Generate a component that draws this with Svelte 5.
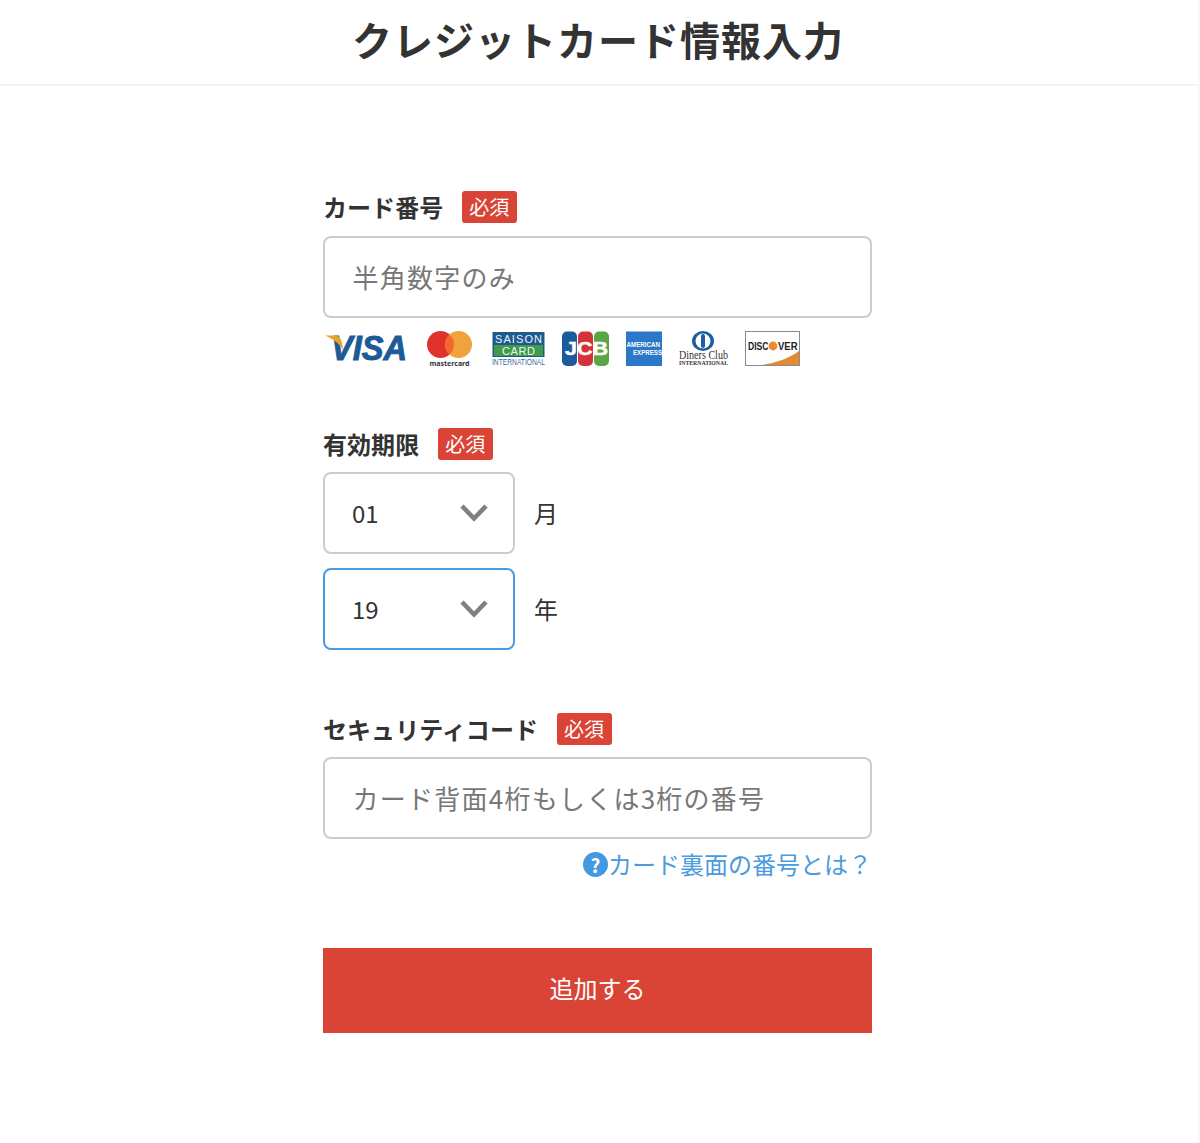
<script>
  let cardNumber = $state('');
  let month = $state('01');
  let year = $state('19');
  let securityCode = $state('');

  const months = ['01', '02', '03', '04', '05', '06', '07', '08', '09', '10', '11', '12'];
  const years = ['19', '20', '21', '22', '23', '24', '25', '26', '27', '28'];
</script>

{#snippet required()}
  <span class="badge">必須</span>
{/snippet}

{#snippet chevron()}
  <svg class="chevron" width="30" height="20" viewBox="0 0 30 20">
    <path d="M3 3 L15 15.5 L27 3" fill="none" stroke="#808080" stroke-width="4.6" />
  </svg>
{/snippet}

<div class="page">
  <header>
    <h1>クレジットカード情報入力</h1>
  </header>

  <form class="form" onsubmit={(e) => e.preventDefault()}>
    <div class="field first">
      <div class="label">カード番号 {@render required()}</div>
      <input type="text" placeholder="半角数字のみ" bind:value={cardNumber} />
      <div class="logos">
        <svg width="88" height="36" viewBox="0 0 88 36">
          <text x="8" y="29" class="visa" textLength="76" lengthAdjust="spacingAndGlyphs">VISA</text>
          <path d="M2 4.5 L12 4.5 C17 5 19 8 20 19 C16 12 10 8 2 4.5 Z" fill="#e9a32d" />
        </svg>
        <svg width="49" height="36" viewBox="0 0 49 36">
          <circle cx="13.5" cy="13.5" r="13.5" fill="#e0312a" />
          <circle cx="31.5" cy="13.5" r="13.5" fill="#f0a33c" />
          <path d="M22.5 3.44 A13.5 13.5 0 0 1 22.5 23.56 A13.5 13.5 0 0 1 22.5 3.44 Z" fill="#f26a2b" />
          <text x="2.5" y="34.5" class="mc" textLength="40" lengthAdjust="spacingAndGlyphs">mastercard</text>
        </svg>
        <svg width="53" height="36" viewBox="0 0 53 36">
          <rect x="0.5" y="1" width="52" height="25" fill="#1d5a90" />
          <rect x="2" y="14" width="49" height="11" fill="#3f9b4a" />
          <text x="26.5" y="12" class="saison" text-anchor="middle" textLength="47">SAISON</text>
          <text x="26.5" y="24" class="saison" text-anchor="middle" textLength="33">CARD</text>
          <text x="0" y="33.5" class="intl" textLength="53" lengthAdjust="spacingAndGlyphs">INTERNATIONAL</text>
        </svg>
        <svg width="49" height="36" viewBox="0 0 49 36">
          <rect x="1" y="0.5" width="15" height="34.5" rx="5" fill="#1d5a9c" />
          <rect x="17" y="0.5" width="15" height="34.5" rx="5" fill="#d6323a" />
          <rect x="33" y="0.5" width="15" height="34.5" rx="5" fill="#5aa644" />
          <text x="4" y="24" class="jcb" textLength="43" lengthAdjust="spacingAndGlyphs">JCB</text>
        </svg>
        <svg width="36" height="36" viewBox="0 0 36 36">
          <rect x="0" y="0.5" width="36" height="34.5" fill="#2b78c9" />
          <text x="0.5" y="15.5" class="amex" textLength="33.5" lengthAdjust="spacingAndGlyphs">AMERICAN</text>
          <text x="7" y="24" class="amex" textLength="29" lengthAdjust="spacingAndGlyphs">EXPRESS</text>
        </svg>
        <svg width="51" height="36" viewBox="0 0 51 36">
          <ellipse cx="25" cy="10" rx="11" ry="10" fill="#1b5f9f" />
          <ellipse cx="25" cy="10" rx="7.5" ry="7.5" fill="#fff" />
          <rect x="23" y="3" width="4" height="14" rx="2" fill="#1b5f9f" />
          <text x="1" y="28" class="diners" textLength="49" lengthAdjust="spacingAndGlyphs">Diners Club</text>
          <text x="1" y="34" class="diners-sub" textLength="49" lengthAdjust="spacingAndGlyphs">INTERNATIONAL</text>
        </svg>
        <svg width="55" height="36" viewBox="0 0 55 36">
          <rect x="0.5" y="0.5" width="54" height="34" fill="#fff" stroke="#8a8a8a" />
          <path d="M17 34 C30 32 45 27 54 20 L54 34 Z" fill="#e58a34" />
          <text x="3" y="19" class="discover" textLength="20.5" lengthAdjust="spacingAndGlyphs">DISC</text>
          <circle cx="28" cy="15" r="4.4" fill="#ee8a2b" />
          <text x="33" y="19" class="discover" textLength="19.5" lengthAdjust="spacingAndGlyphs">VER</text>
        </svg>
      </div>
    </div>

    <div class="field date">
      <div class="label">有効期限 {@render required()}</div>
      <div class="date-row">
        <div class="select-wrap">
          <select bind:value={month}>
            {#each months as m}
              <option value={m}>{m}</option>
            {/each}
          </select>
          {@render chevron()}
        </div>
        <span class="unit">月</span>
      </div>
      <div class="date-row">
        <div class="select-wrap focused">
          <select bind:value={year}>
            {#each years as y}
              <option value={y}>{y}</option>
            {/each}
          </select>
          {@render chevron()}
        </div>
        <span class="unit">年</span>
      </div>
    </div>

    <div class="field security">
      <div class="label">セキュリティコード {@render required()}</div>
      <input type="text" placeholder="カード背面4桁もしくは3桁の番号" bind:value={securityCode} />
      <div class="help">
        <span class="help-icon">?</span><span>カード裏面の番号とは？</span>
      </div>
    </div>

    <button type="submit">追加する</button>
  </form>
</div>

<style>
  :global(body) {
    background: #fff;
  }

  .page {
    box-sizing: border-box;
    height: 1143px;
    overflow: hidden;
    border-right: 2px solid #f7f7f7;
    color: #333;
    font-family: "Noto Sans CJK JP", "Noto Sans", sans-serif;
  }

  header {
    box-sizing: border-box;
    height: 86px;
    padding-bottom: 6px;
    border-bottom: 2px solid #f4f4f4;
    display: flex;
    align-items: center;
    justify-content: center;
  }

  h1 {
    margin: 0 2px 0 0;
    font-size: 40px;
    font-weight: 700;
    letter-spacing: 1px;
    line-height: 78px;
  }

  .form {
    width: 549px;
    margin-left: 323px;
    padding-top: 105px;
  }

  .field {
    margin-bottom: 61px;
  }

  .field.date {
    margin-bottom: 63px;
  }

  .field.security {
    margin-bottom: 67px;
  }

  .label {
    display: flex;
    align-items: flex-start;
    gap: 19px;
    height: 32px;
    margin-bottom: 12px;
    font-size: 24px;
    font-weight: 700;
    letter-spacing: 0.05px;
    line-height: 32px;
  }

  .first .label {
    margin-bottom: 13px;
  }

  .badge {
    display: block;
    width: 55px;
    height: 32px;
    line-height: 32px;
    text-align: center;
    border-radius: 3px;
    background: #d94436;
    color: #fff;
    font-size: 20px;
    font-weight: 400;
    letter-spacing: 0;
    text-indent: -1px;
  }

  input,
  select {
    box-sizing: border-box;
    display: block;
    width: 100%;
    height: 82px;
    padding: 0 27px;
    border: 2px solid #cccccc;
    border-radius: 8px;
    background: #fff;
    color: #333;
    font-family: inherit;
    font-size: 24px;
    outline: none;
  }

  input {
    padding-left: 27.5px;
  }

  input::placeholder {
    color: #777;
    font-size: 26px;
    letter-spacing: 1.25px;
    opacity: 1;
  }

  .logos {
    display: flex;
    gap: 16px;
    height: 36px;
    margin-top: 13px;
  }

  .logos svg {
    display: block;
    overflow: visible;
  }

  .visa {
    font-family: "Liberation Sans", sans-serif;
    font-size: 35px;
    font-weight: 700;
    font-style: italic;
    fill: #1c5a98;
    stroke: #1c5a98;
    stroke-width: 1px;
  }

  .mc {
    font-family: "Noto Sans", sans-serif;
    font-size: 7.5px;
    font-weight: 700;
    fill: #333;
  }

  .saison {
    font-family: "Liberation Sans", sans-serif;
    font-size: 11px;
    fill: #eef4f8;
  }

  .intl {
    font-family: "Liberation Sans", sans-serif;
    font-size: 8.5px;
    fill: #3a6a9a;
  }

  .jcb {
    font-family: "Liberation Sans", sans-serif;
    font-size: 19px;
    font-weight: 700;
    fill: #fff;
    stroke: #fff;
    stroke-width: 0.5px;
  }

  .amex {
    font-family: "Liberation Sans", sans-serif;
    font-size: 6.5px;
    font-weight: 700;
    fill: #fff;
  }

  .diners {
    font-family: "Liberation Serif", serif;
    font-size: 13px;
    fill: #333;
  }

  .diners-sub {
    font-family: "Liberation Serif", serif;
    font-size: 5.5px;
    font-weight: 700;
    fill: #333;
  }

  .discover {
    font-family: "Liberation Sans", sans-serif;
    font-size: 11.5px;
    font-weight: 700;
    fill: #222;
  }

  .date-row {
    display: flex;
    align-items: center;
    gap: 19px;
    font-size: 24px;
  }

  .date-row + .date-row {
    margin-top: 14px;
  }

  .unit {
    margin-top: -2px;
  }

  .select-wrap {
    position: relative;
    width: 192px;
  }

  select {
    appearance: none;
    -webkit-appearance: none;
    padding-bottom: 2px;
  }

  .focused select {
    border-color: #4a9be4;
  }

  .chevron {
    position: absolute;
    right: 26px;
    top: 31px;
    pointer-events: none;
  }

  .help {
    display: flex;
    justify-content: flex-end;
    align-items: center;
    height: 36px;
    margin-top: 6px;
    color: #4a9be0;
    font-size: 24px;
  }

  .help-icon {
    width: 25px;
    height: 25px;
    margin-top: 3px;
    border-radius: 50%;
    background: #4299e1;
    color: #fff;
    font-size: 19px;
    font-weight: 700;
    line-height: 25px;
    text-align: center;
  }

  button {
    display: block;
    width: 549px;
    height: 85px;
    padding: 0 0 6px;
    border: none;
    background: #d94436;
    color: #fff;
    font-family: inherit;
    font-size: 24px;
  }
</style>
